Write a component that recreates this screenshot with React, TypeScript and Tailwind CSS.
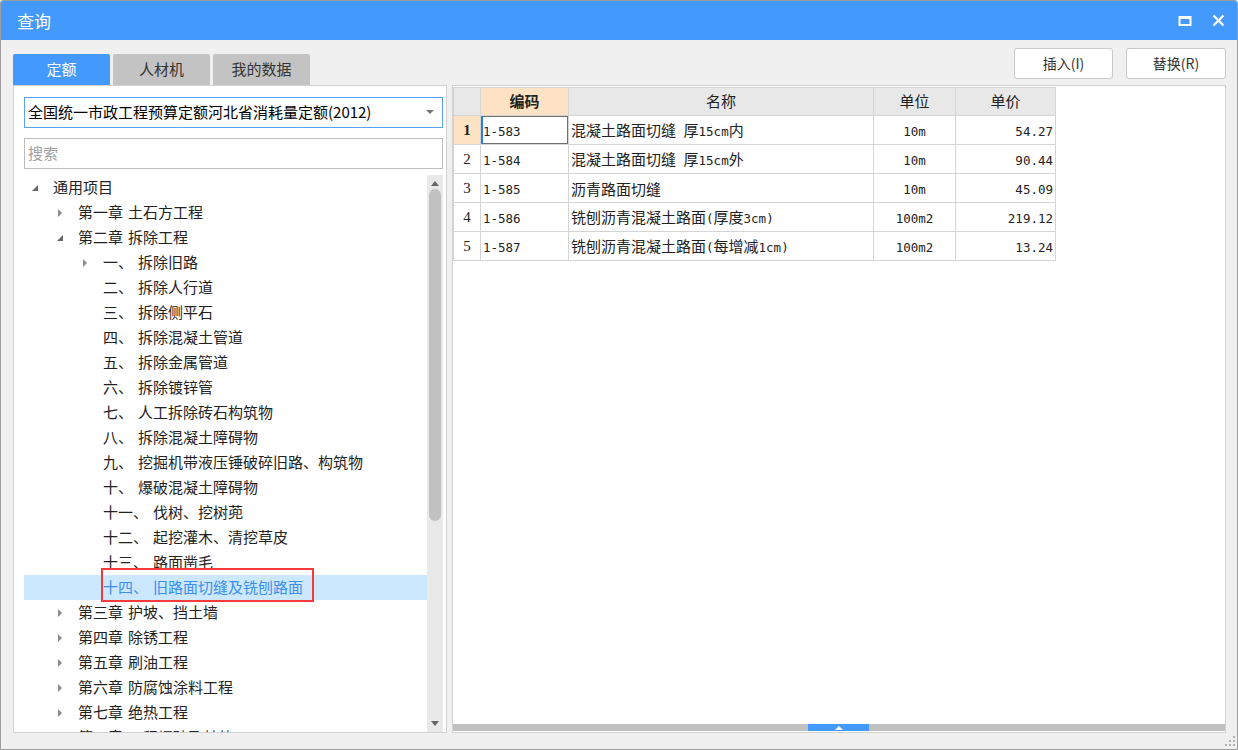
import React from 'react';

const CJK = "font-['Noto_Sans_CJK_SC',sans-serif]";

type Node = { level: number; label: string; name?: string; arrow?: 'open' | 'closed'; selected?: boolean };

const tree: Node[] = [
  { level: 0, label: '通用项目', arrow: 'open' },
  { level: 1, label: '第一章', name: '土石方工程', arrow: 'closed' },
  { level: 1, label: '第二章', name: '拆除工程', arrow: 'open' },
  { level: 2, label: '一、', name: '拆除旧路', arrow: 'closed' },
  { level: 2, label: '二、', name: '拆除人行道' },
  { level: 2, label: '三、', name: '拆除侧平石' },
  { level: 2, label: '四、', name: '拆除混凝土管道' },
  { level: 2, label: '五、', name: '拆除金属管道' },
  { level: 2, label: '六、', name: '拆除镀锌管' },
  { level: 2, label: '七、', name: '人工拆除砖石构筑物' },
  { level: 2, label: '八、', name: '拆除混凝土障碍物' },
  { level: 2, label: '九、', name: '挖掘机带液压锤破碎旧路、构筑物' },
  { level: 2, label: '十、', name: '爆破混凝土障碍物' },
  { level: 2, label: '十一、', name: '伐树、挖树蔸' },
  { level: 2, label: '十二、', name: '起挖灌木、清挖草皮' },
  { level: 2, label: '十三、', name: '路面凿毛' },
  { level: 2, label: '十四、', name: '旧路面切缝及铣刨路面', selected: true },
  { level: 1, label: '第三章', name: '护坡、挡土墙', arrow: 'closed' },
  { level: 1, label: '第四章', name: '除锈工程', arrow: 'closed' },
  { level: 1, label: '第五章', name: '刷油工程', arrow: 'closed' },
  { level: 1, label: '第六章', name: '防腐蚀涂料工程', arrow: 'closed' },
  { level: 1, label: '第七章', name: '绝热工程', arrow: 'closed' },
  { level: 1, label: '第八章', name: '工程爆破及其他', arrow: 'closed' },
];

const rows = [
  { code: '1-583', name: '混凝土路面切缝 厚15cm内', unit: '10m', price: '54.27' },
  { code: '1-584', name: '混凝土路面切缝 厚15cm外', unit: '10m', price: '90.44' },
  { code: '1-585', name: '沥青路面切缝', unit: '10m', price: '45.09' },
  { code: '1-586', name: '铣刨沥青混凝土路面(厚度3cm)', unit: '100m2', price: '219.12' },
  { code: '1-587', name: '铣刨沥青混凝土路面(每增减1cm)', unit: '100m2', price: '13.24' },
];

// SimSun-like: half width latin, full width CJK
const Mixed = ({ text }: { text: string }) => (
  <span className="whitespace-nowrap leading-[20px]">
    {text.split(/([\x00-\x7f]+)/).map((s, i) =>
      !s ? null : /^[\x00-\x7f]+$/.test(s) ? (
        <span key={i} className="font-['DejaVu_Sans_Mono',monospace] text-[12.5px] whitespace-pre">{s}</span>
      ) : (
        <span key={i} className={`${CJK} text-[15px]`}>{s}</span>
      )
    )}
  </span>
);

const Arrow = ({ kind }: { kind?: 'open' | 'closed' }) => {
  if (kind === 'closed')
    return (
      <svg width="12" height="10" viewBox="0 0 12 10">
        <path d="M4 1 L8 5 L4 9 Z" fill="#8c8c8c" />
      </svg>
    );
  if (kind === 'open')
    return (
      <svg width="12" height="10" viewBox="0 0 12 10">
        <path d="M9 2 L9 8 L3 8 Z" fill="#666" />
      </svg>
    );
  return <span className="w-[12px]" />;
};

const cell = 'h-full border-r border-[#d4d4d4] flex items-center';

export default function App() {
  return (
    <div className={`w-[1238px] h-[750px] flex flex-col bg-[#f0f0f0] border border-[#9d9d9d] rounded-t-[3px] overflow-hidden ${CJK}`}>
      {/* title bar */}
      <div className="h-[39px] bg-[#4499fd] flex items-center justify-between pl-[16px] pr-[12px]">
        <span className="text-white text-[17px]">查询</span>
        <div className="flex items-center gap-[20px]">
          <svg width="14" height="12" viewBox="0 0 14 12">
            <rect x="1.5" y="2" width="11" height="8" fill="none" stroke="#fff" strokeWidth="2" />
            <rect x="1" y="1" width="12" height="3" fill="#fff" />
          </svg>
          <svg width="13" height="13" viewBox="0 0 13 13">
            <path d="M1.5 1.5 L11.5 11.5 M11.5 1.5 L1.5 11.5" stroke="#fff" strokeWidth="2.2" />
          </svg>
        </div>
      </div>

      {/* tabs + buttons */}
      <div className="h-[45px] flex justify-between pl-[12px] pr-[11px]">
        <div className="flex items-end gap-[3px]">
          <div className="w-[97px] h-[31px] bg-[#4499fd] rounded-t-[2px] flex items-center justify-center text-white text-[15px]">定额</div>
          <div className="w-[97px] h-[31px] bg-[#c3c3c3] rounded-t-[2px] flex items-center justify-center text-[#333] text-[15px]">人材机</div>
          <div className="w-[97px] h-[31px] bg-[#c3c3c3] rounded-t-[2px] flex items-center justify-center text-[#333] text-[15px]">我的数据</div>
        </div>
        <div className="flex gap-[13px] pt-[8px]">
          <div className="w-[99px] h-[31px] bg-white border border-[#c9c9c9] rounded-[3px] flex items-center justify-center text-[14px] text-[#333]">插入(I)</div>
          <div className="w-[100px] h-[31px] bg-white border border-[#c9c9c9] rounded-[3px] flex items-center justify-center text-[14px] text-[#333]">替换(R)</div>
        </div>
      </div>

      {/* panels */}
      <div className="flex gap-[5px] pl-[12px] pr-[11px] h-[648px]">
        {/* left */}
        <div className="w-[434px] h-full bg-white border border-[#d2d2d2] flex flex-col pl-[10px] pr-[3px] pt-[11px]">
          <div className="h-[31px] border border-[#5aa2f5] flex items-center justify-between pl-[3px] pr-[8px] shrink-0">
            <span className="text-[15px] text-black">全国统一市政工程预算定额河北省消耗量定额(2012)</span>
            <svg width="8" height="5" viewBox="0 0 8 5"><path d="M0 0 L8 0 L4 4 Z" fill="#777" /></svg>
          </div>
          <div className="h-[31px] mt-[10px] border border-[#bdbdbd] flex items-center pl-[3px] shrink-0">
            <span className="text-[15px] text-[#a0a0a0]">搜索</span>
          </div>
          <div className="mt-[6px] flex flex-1 min-h-0">
            <div className="flex-1 overflow-hidden">
              {tree.map((n, i) => (
                <div
                  key={i}
                  className={`relative h-[25px] flex items-center ${n.selected ? 'bg-[#cce8ff] text-[#3b8ff0]' : 'text-[#222]'}`}
                  style={{ paddingLeft: 5 + n.level * 25 }}
                >
                  <Arrow kind={n.arrow} />
                  <span className="ml-[12px] text-[15px] whitespace-nowrap">
                    {n.label}
                    {n.name && <span className="ml-[5px]">{n.name}</span>}
                  </span>
                  {n.selected && (
                    <div className="absolute left-[77px] top-[-7px] w-[213px] h-[34px] border-2 border-[#f53a3a] pointer-events-none" />
                  )}
                </div>
              ))}
            </div>
            <div className="w-[16px] bg-[#e9e9e9] flex flex-col items-center">
              <svg width="10" height="12" viewBox="0 0 10 12" className="mt-[2px]"><path d="M1 9 L9 9 L5 4 Z" fill="#666" /></svg>
              <div className="w-[12px] h-[332px] bg-[#c1c1c1] rounded-full" />
              <div className="flex-1" />
              <svg width="10" height="12" viewBox="0 0 10 12" className="mb-[2px]"><path d="M1 3 L9 3 L5 8 Z" fill="#666" /></svg>
            </div>
          </div>
        </div>

        {/* right */}
        <div className="flex-1 h-full bg-white border border-[#d2d2d2] flex flex-col">
          <div className="flex-1 pt-[1px]">
            <div className="w-[603px] border-l border-t border-[#d4d4d4] text-[#222]">
              <div className="h-[28px] flex border-b border-[#d4d4d4] bg-[#e8e8e8] text-[15px]">
                <div className={`${cell} w-[27px]`} />
                <div className={`${cell} w-[88px] justify-center bg-[#fde3c3] font-bold`}>编码</div>
                <div className={`${cell} w-[305px] justify-center`}>名称</div>
                <div className={`${cell} w-[82px] justify-center`}>单位</div>
                <div className={`${cell} w-[100px] justify-center`}>单价</div>
              </div>
              {rows.map((r, i) => (
                <div key={r.code} className="h-[29px] flex border-b border-[#d4d4d4]">
                  <div className={`${cell} w-[27px] justify-center font-['Liberation_Serif',serif] text-[15px] ${i === 0 ? 'bg-[#fde3c3] font-bold' : ''}`}>{i + 1}</div>
                  <div className={`${cell} w-[88px] pl-[2px] ${i === 0 ? 'shadow-[inset_2px_0_0_#2b7de9,inset_0_0_0_1px_#6f6f6f]' : ''}`}>
                    <Mixed text={r.code} />
                  </div>
                  <div className={`${cell} w-[305px] pl-[2px]`}><Mixed text={r.name} /></div>
                  <div className={`${cell} w-[82px] justify-center`}><Mixed text={r.unit} /></div>
                  <div className={`${cell} w-[100px] justify-end pr-[2px]`}><Mixed text={r.price} /></div>
                </div>
              ))}
            </div>
          </div>
          <div className="h-[7px] bg-[#c0c0c0] flex shrink-0 mb-[1px]">
            <div className="w-[355px]" />
            <div className="w-[61px] h-full bg-[#4499fd] flex items-center justify-center">
              <svg width="8" height="5" viewBox="0 0 8 5"><path d="M0 5 L8 5 L4 1 Z" fill="#fff" /></svg>
            </div>
          </div>
        </div>
      </div>

      {/* status / grip */}
      <div className="flex-1 flex justify-end items-end pr-[2px] pb-[3px]">
        <svg width="10" height="10" viewBox="0 0 10 10">
          <rect x="8" y="0" width="2" height="2" fill="#b0b0b0" />
          <rect x="4" y="4" width="2" height="2" fill="#b0b0b0" />
          <rect x="8" y="4" width="2" height="2" fill="#b0b0b0" />
          <rect x="0" y="8" width="2" height="2" fill="#b0b0b0" />
          <rect x="4" y="8" width="2" height="2" fill="#b0b0b0" />
          <rect x="8" y="8" width="2" height="2" fill="#b0b0b0" />
        </svg>
      </div>
    </div>
  );
}
